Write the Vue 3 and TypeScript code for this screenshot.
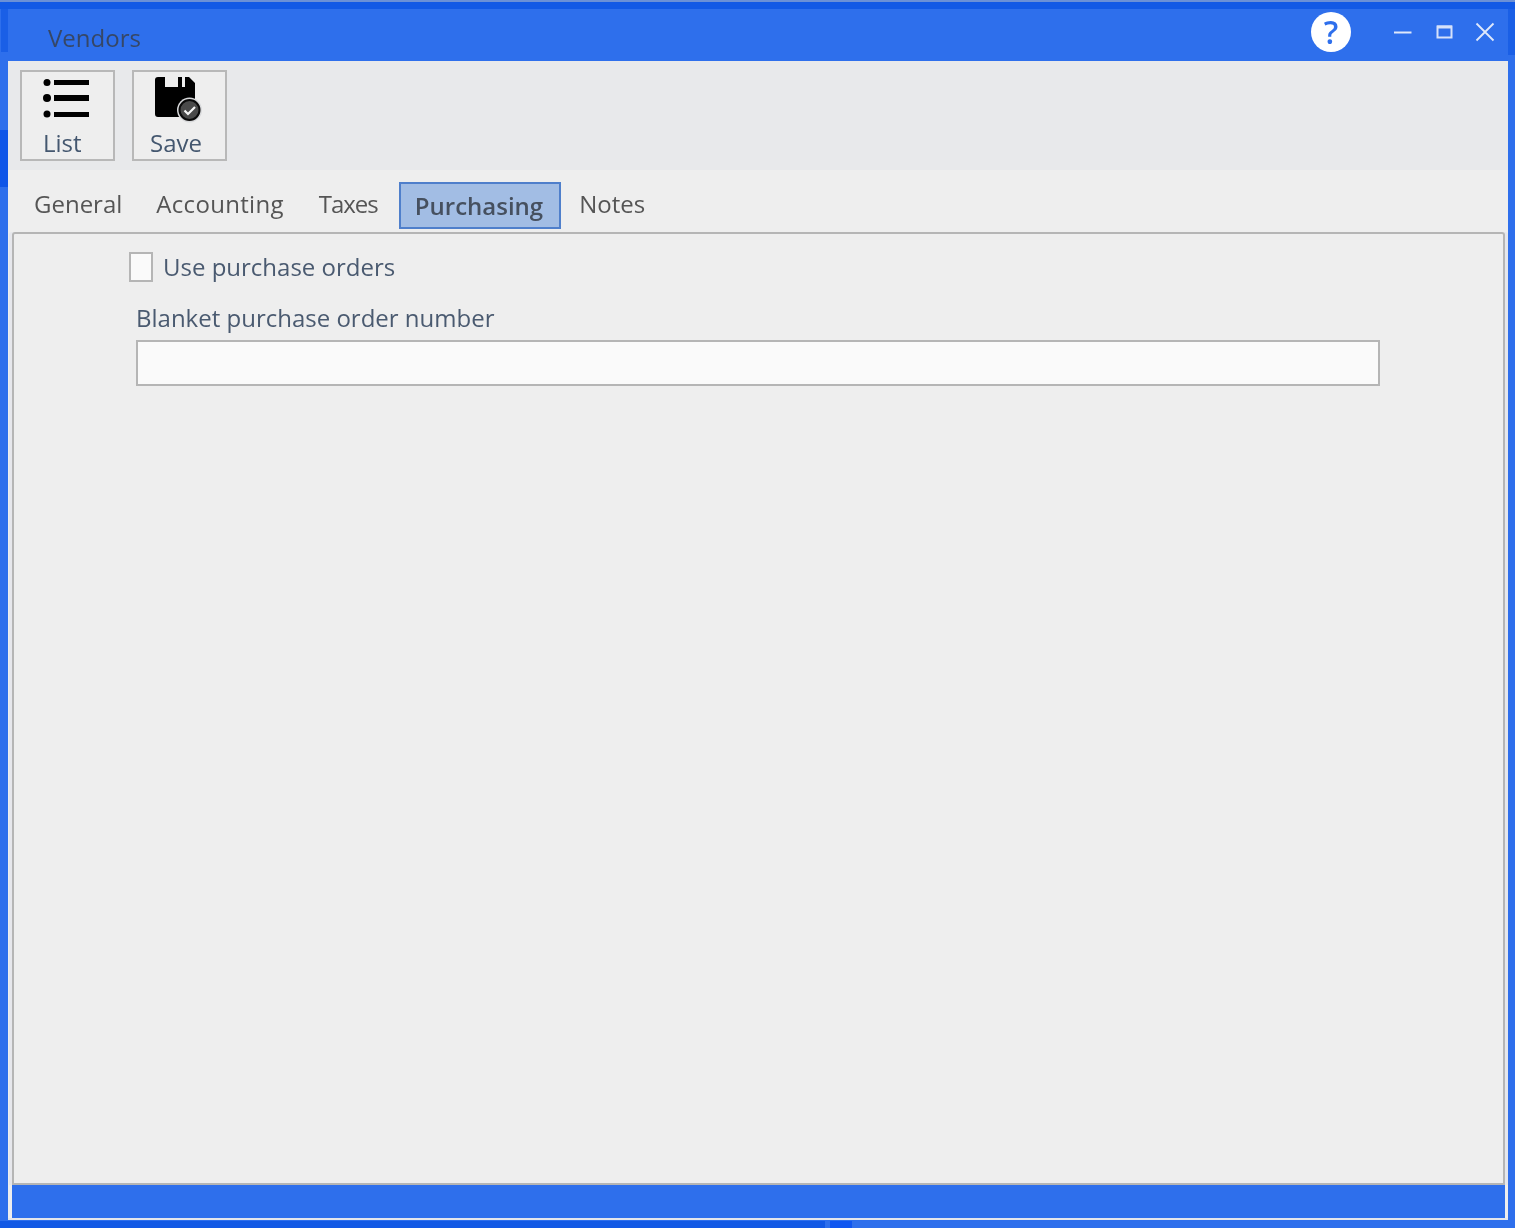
<script setup lang="ts">
const tabs: string[] = ['General', 'Accounting', 'Taxes', 'Purchasing', 'Notes']
</script>

<template>
  <div class="screen">
    <div class="top-edge"></div>
    <div class="window">
      <header class="titlebar">
        <span class="title">Vendors</span>
        <div class="controls">
          <span class="help">?</span>
          <svg class="ctl min" width="20" height="20" viewBox="0 0 20 20"><path d="M1 10.5H18.5" stroke="#dfe8fb" stroke-width="2" fill="none"/></svg>
          <svg class="ctl max" width="20" height="20" viewBox="0 0 20 20"><path d="M3.5 4.5H17.5V15.5H3.5Z" stroke="#d5e1fa" stroke-width="2" fill="none"/><path d="M3 5H18" stroke="#d5e1fa" stroke-width="3" fill="none"/></svg>
          <svg class="ctl close" width="20" height="20" viewBox="0 0 20 20"><path d="M1.5 1.5L18.5 18.5M18.5 1.5L1.5 18.5" stroke="#dfe8fb" stroke-width="1.8" fill="none"/></svg>
        </div>
      </header>
      <div class="body">
        <div class="toolbar">
          <button class="tool list-tool">
            <svg width="48" height="42" viewBox="0 0 48 42">
              <circle cx="5" cy="5.5" r="3.5" fill="#000"/>
              <circle cx="5" cy="21" r="4" fill="#000"/>
              <circle cx="5" cy="37" r="3.5" fill="#000"/>
              <rect x="12" y="3" width="35" height="5" fill="#000"/>
              <rect x="12" y="18" width="35" height="6" fill="#000"/>
              <rect x="12" y="35" width="35" height="5" fill="#000"/>
            </svg>
            <span>List</span>
          </button>
          <button class="tool save-tool">
            <svg width="50" height="46" viewBox="0 0 50 46">
              <path d="M4 0H11V10H31V0H35L41 6V36Q41 40 37 40H4Q1 40 1 37V3Q1 0 4 0Z" fill="#000"/>
              <rect x="24" y="0" width="4" height="10" fill="#000"/>
              <circle cx="35.5" cy="33" r="12.5" fill="#d8d9db"/>
              <circle cx="35.5" cy="33" r="10" fill="#4a4a4a" stroke="#0a0a0a" stroke-width="2"/>
              <path d="M30.5 33.5L34 37L41 30" stroke="#f6f6f6" stroke-width="2.2" fill="none"/>
            </svg>
            <span>Save</span>
          </button>
        </div>
        <nav class="tabs">
          <span
            v-for="tab in tabs"
            :key="tab"
            class="tab"
            :class="[tab.toLowerCase(), { active: tab === 'Purchasing' }]"
          >{{ tab }}</span>
        </nav>
        <section class="panel">
          <label class="check-row">
            <span class="box"></span>
            <span>Use purchase orders</span>
          </label>
          <div class="field">
            <label class="field-label">Blanket purchase order number</label>
            <div class="input"></div>
          </div>
        </section>
        <footer class="status"></footer>
      </div>
    </div>
  </div>
</template>

<style>
html, body { margin: 0; background: #2e6fec; }
</style>

<style scoped>
.screen {
  width: 1515px;
  height: 1228px;
  overflow: hidden;
  background:
    linear-gradient(#1a5fe6, #1a5fe6) 1px 9px / 7px 43px no-repeat,
    linear-gradient(#0f56e8, #0f56e8) 0 130px / 8px 57px no-repeat,
    linear-gradient(#1a5fe6, #1a5fe6) 1508px 9px / 7px 46px no-repeat,
    linear-gradient(#1259e5, #1259e5) 0 1221px / 825px 7px no-repeat,
    linear-gradient(#0f56f0, #0f56f0) 830px 1221px / 22px 7px no-repeat,
    #2e6fec;
  font-family: "Open Sans", "Noto Sans", sans-serif;
  color: #444;
  box-sizing: border-box;
  display: flex;
  flex-direction: column;
}
.top-edge {
  height: 9px;
  flex: none;
  border-top: 2px solid #6b90d6;
  background: #1259e5;
  box-sizing: border-box;
}
.window {
  margin: 0 7px 0 8px;
  height: 1211px;
  display: flex;
  flex-direction: column;
  filter: blur(0.45px);
}
.titlebar {
  height: 52px;
  flex: none;
  display: flex;
  align-items: center;
  justify-content: space-between;
  background: #2e6fec;
}
.title {
  margin: 5px 0 0 40px;
  font-size: 24px;
  color: #364766;
}
.controls { display: flex; align-items: center; margin: 0 13px 6px 0; }
.help {
  width: 40px;
  height: 40px;
  border-radius: 50%;
  background: #fff;
  color: #2e6fec;
  font: 600 32px/40px "Open Sans", sans-serif;
  text-align: center;
  margin: 0 42px 0 0;
}
.ctl { display: block; }
.min { margin-right: 21px; }
.max { margin-right: 21px; }
.body {
  flex: 1;
  display: flex;
  flex-direction: column;
  background: #eeeeee;
  border-bottom: 2px solid #e4e6eb;
  box-sizing: border-box;
  height: 1159px;
}
.toolbar {
  height: 109px;
  flex: none;
  background: #e8e9eb;
  display: flex;
  gap: 17px;
  padding: 9px 0 0 12px;
  box-sizing: border-box;
}
.tool {
  width: 95px;
  height: 91px;
  box-sizing: border-box;
  border: 2px solid #b8b8b8;
  background: #eeeeee;
  padding: 0;
  margin: 0;
  font: 24px/30px "Open Sans", sans-serif;
  color: #44576f;
  display: flex;
  flex-direction: column;
  align-items: flex-start;
}
.tool svg { display: block; flex: none; }
.list-tool svg { margin: 5px 0 0 20px; }
.list-tool span { margin: 9px 0 0 21px; }
.save-tool svg { margin: 5px 0 0 20px; }
.save-tool span { margin: 5px 0 0 16px; }
.tabs {
  height: 62px;
  flex: none;
  display: flex;
  align-items: flex-start;
  padding: 12px 0 0 8px;
  box-sizing: border-box;
}
.tab {
  height: 47px;
  padding: 0 16px;
  font-size: 24px;
  line-height: 39px;
  color: #555;
  box-sizing: border-box;
  border: 2px solid transparent;
}
.tab.accounting { padding: 0 14px; letter-spacing: 0.3px; }
.tab.taxes { letter-spacing: -1px; padding: 0 19px 0 17px; }
.tab.active {
  background: #a2bde4;
  border-color: #4f7fcb;
  color: #46505f;
  font-weight: 600;
  line-height: 43px;
  padding: 0 16px 0 14px;
}
.panel {
  flex: 1;
  margin: 0 3px 0 4px;
  border: 2px solid #b5b5b5;
  border-radius: 3px 3px 0 0;
  box-sizing: border-box;
  padding: 18px 0 0 115px;
  box-shadow: -3px 0 0 #e6e7ec, 3px 0 0 #e6e7ec;
}
.check-row {
  display: flex;
  align-items: center;
  gap: 10px;
  font-size: 24px;
  line-height: 30px;
  color: #4a5a70;
}
.box {
  width: 24px;
  height: 30px;
  box-sizing: border-box;
  border: 2px solid #b5b5b5;
  background: #fafafa;
}
.field { margin: 21px 0 0 7px; width: 1244px; }
.field-label {
  display: block;
  font-size: 24px;
  line-height: 30px;
  color: #4a5a70;
}
.input {
  height: 46px;
  margin-top: 7px;
  box-sizing: border-box;
  border: 2px solid #b5b5b5;
  background: #fafafa;
}
.status {
  height: 33px;
  flex: none;
  margin: 0 3px 0 4px;
  background: #2e6fec;
}
</style>
